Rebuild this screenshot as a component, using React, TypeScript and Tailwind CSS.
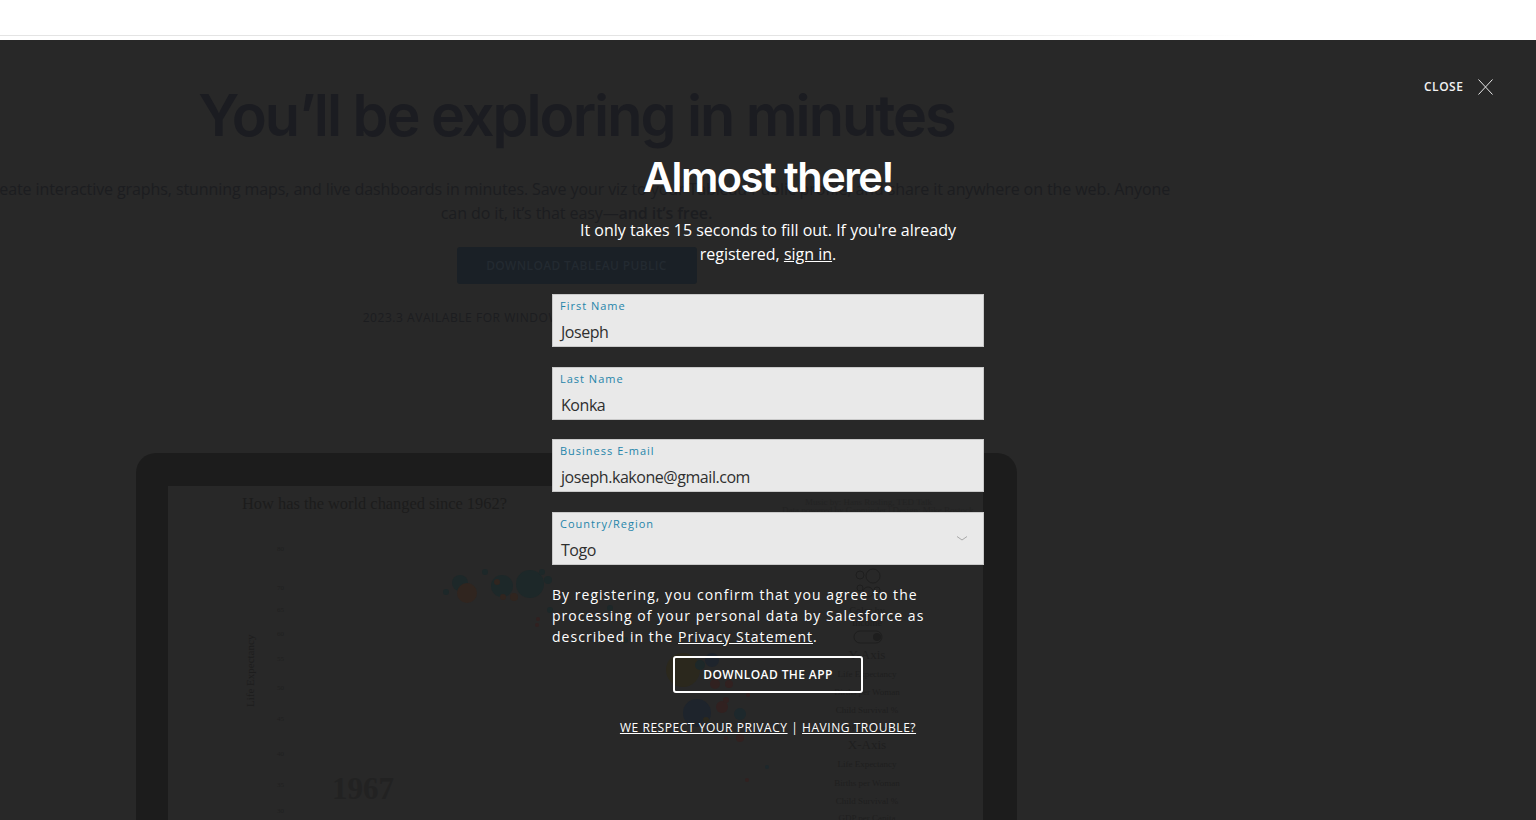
const bubbles: [number, number, number, string][] = [
  [460, 583, 8, "#1d2829"], [467, 593, 10, "#30251f"], [446, 592, 3, "#1d2829"], [485, 572, 3, "#1d2829"],
  [502, 586, 11, "#1d2829"], [530, 584, 14, "#1d2829"], [514, 597, 4, "#30251f"], [503, 597, 3, "#30251f"],
  [497, 582, 3, "#30251f"], [542, 572, 3, "#1d2829"], [548, 580, 4, "#1d2829"], [538, 619, 2, "#312120"],
  [537, 625, 2, "#312120"], [683, 670, 17, "#2b281d"], [697, 713, 14, "#1e242c"], [722, 707, 6, "#312120"],
  [740, 714, 6, "#1d282c"], [740, 738, 4, "#312120"], [747, 780, 2, "#312120"], [767, 767, 2, "#1d282c"],
  [712, 660, 7, "#1e242c"], [729, 684, 4, "#312120"], [715, 684, 5, "#312120"], [700, 665, 5, "#1d2829"],
  [726, 700, 3, "#312120"], [748, 695, 2, "#312120"], [726, 738, 2, "#312120"], [706, 720, 3, "#2b281d"],
  [550, 610, 3, "#1d2829"], [610, 608, 3, "#1d2829"], [575, 640, 2, "#1d2829"], [625, 640, 3, "#1d2829"],
];
const ticks: [number, string][] = [
  [548, "80"], [587, "70"], [609, "65"], [633, "60"], [658, "55"], [687, "50"], [718, "45"], [753, "40"], [784, "35"], [810, "30"],
];
const list: [number, string, number][] = [
  [611, "Color by", 10], [623, "Income", 10], [656, "Y-Axis", 13], [674, "Life Expectancy", 9], [692, "Births per Woman", 9],
  [710, "Child Survival %", 9], [728, "GDP per Capita", 9], [746, "X-Axis", 13], [764, "Life Expectancy", 9],
  [783, "Births per Woman", 9], [801, "Child Survival %", 9], [818, "GDP per Capita", 9],
];

function Field({ label, value, select }: { label: string; value: string; select?: boolean }) {
  return (
    <div className="flex h-[53px] w-[432px] items-start justify-between border border-[#c9c9c9] bg-[#e9e9e9] pl-[7px] pr-[15px]">
      <div className="flex flex-col">
        <span className="mt-[4px] text-[11px] leading-[14px] tracking-[1px] text-[#1f85a9]">{label}</span>
        <span className="mt-[8px] pl-px text-[16px] leading-[22px] tracking-[-0.45px] text-[#2f2f2f]">{value}</span>
      </div>
      {select && (
        <svg className="mt-[22px]" width="12" height="8" viewBox="0 0 12 8" fill="none" stroke="#a8a8a8" strokeWidth="1">
          <path d="M1 1.5 6 5l5-3.5" />
        </svg>
      )}
    </div>
  );
}

export default function App() {
  return (
    <div className="relative h-[820px] overflow-hidden bg-[#282828] font-['Open_Sans',sans-serif]">
      <header className="h-10 bg-white pt-[35px]">
        <div className="h-px w-[1260px] bg-linear-to-r from-[#e4e4e4] via-[#e4e4e4] via-70% to-white" />
      </header>

      <main className="flex w-[1153px] flex-col items-center">
        <h2 className="mt-[35px] whitespace-nowrap font-['Inter',sans-serif] text-[57.6px] leading-[80px] font-semibold tracking-[-2px] text-[#1b1c21]">
          You’ll be exploring in minutes
        </h2>
        <p className="mt-[22px] whitespace-nowrap text-center text-[16px] leading-6 tracking-[-0.09px] text-[#1c1d20]">
          Create interactive graphs, stunning maps, and live dashboards in minutes. Save your viz to your Tableau Public profile, and share it anywhere on the web. Anyone
          <br />
          can do it, it’s that easy—<b className="font-semibold">and it’s free.</b>
        </p>
        <div className="mt-[22px] flex h-[37px] w-[240px] items-center justify-center rounded-[3px] bg-[#1a2026] text-[12px] font-semibold tracking-[0.35px] text-[#232a31]">
          DOWNLOAD TABLEAU PUBLIC
        </div>
        <p className="mt-[25px] whitespace-nowrap text-[12px] leading-[18px] tracking-[0.55px] text-[#1c1d20]">
          2023.3 AVAILABLE FOR WINDOWS AND MAC | SYSTEM REQUIREMENTS
        </p>
        <div className="mt-[126px] h-[400px] w-[881px] rounded-t-[20px] bg-[#1c1c1c] pl-8 pt-[33px]">
          <svg className="block bg-[#282828]" width="815" height="367" viewBox="168 486 815 367" fontFamily="'Liberation Serif', serif">
            <text x="242" y="509" fontSize="16.4" fill="#1c1c1c">How has the world changed since 1962?</text>
            <text x="805" y="505" fontSize="9" fill="#232323">Music by: Hans Rosling, TED Talk</text>
            <text x="782" y="513" fontSize="9" fill="#232323">Data powered by Gapminder | Design: Mike Bostock</text>
            {ticks.map(([y, t]) => (
              <text key={y} x="277" y={y + 3} fontSize="7" fill="#202020">{t}</text>
            ))}
            <text transform="translate(254 707) rotate(-90)" fontSize="11" fill="#1d1d1d">Life Expectancy</text>
            <text x="332" y="799" fontSize="31" fontWeight="700" fill="#222222">1967</text>
            {bubbles.map(([x, y, r, c]) => (
              <circle key={`${x}-${y}`} cx={x} cy={y} r={r} fill={c} />
            ))}
            <g fill="none" stroke="#1e1e1e">
              <circle cx="860" cy="575" r="4" />
              <circle cx="873" cy="576" r="7" />
              <circle cx="860" cy="588" r="3" />
              <circle cx="868" cy="592" r="5" />
              <circle cx="877" cy="590" r="3" />
              <rect x="854" y="631" width="28" height="12" rx="6" />
            </g>
            <circle cx="877" cy="637" r="4" fill="#1e1e1e" />
            {list.map(([y, t, s]) => (
              <text key={y} x="867" y={y + 3} fontSize={s} textAnchor="middle" fill="#1f1f1f">{t}</text>
            ))}
          </svg>
        </div>
      </main>

      <button className="absolute top-[78px] left-[1424px] flex items-center gap-[15px] text-[12px] leading-[18px] font-semibold tracking-[0.5px] text-[#f2f2f2]">
        CLOSE
        <svg width="15" height="16" viewBox="0 0 15 16" fill="none" stroke="#e8e8e8" strokeWidth="1">
          <path d="M.5.5l14 15M14.5.5l-14 15" />
        </svg>
      </button>

      <section className="absolute inset-x-0 top-[40px] flex flex-col items-center">
        <h1 className="mt-[108px] font-['Inter',sans-serif] text-[41.5px] leading-[58px] font-semibold tracking-[-1.5px] text-white">
          Almost there!
        </h1>
        <p className="mt-[12px] w-[432px] text-center text-[16px] leading-6 text-white">
          It only takes 15 seconds to fill out. If you're already
          <br />
          registered, <u>sign in</u>.
        </p>
        <div className="mt-[28px] flex flex-col gap-[19.5px]">
          <Field label="First Name" value="Joseph" />
          <Field label="Last Name" value="Konka" />
          <Field label="Business E-mail" value="joseph.kakone@gmail.com" />
          <Field label="Country/Region" value="Togo" select />
        </div>
        <p className="mt-[19px] w-[432px] text-[14px] leading-[21px] font-medium tracking-[1.03px] text-white">
          By registering, you confirm that you agree to the
          <br />
          processing of your personal data by Salesforce as
          <br />
          described in the <u>Privacy Statement</u>.
        </p>
        <div className="mt-[9px] flex h-[37px] w-[190px] items-center justify-center rounded-[3px] border-2 border-white pt-[2px] text-[12px] font-semibold tracking-[0.4px] text-white">
          DOWNLOAD THE APP
        </div>
        <p className="mt-[26px] text-[12px] leading-[18px] tracking-[0.55px] text-white">
          <u>WE RESPECT YOUR PRIVACY</u> | <u>HAVING TROUBLE?</u>
        </p>
      </section>
    </div>
  );
}
